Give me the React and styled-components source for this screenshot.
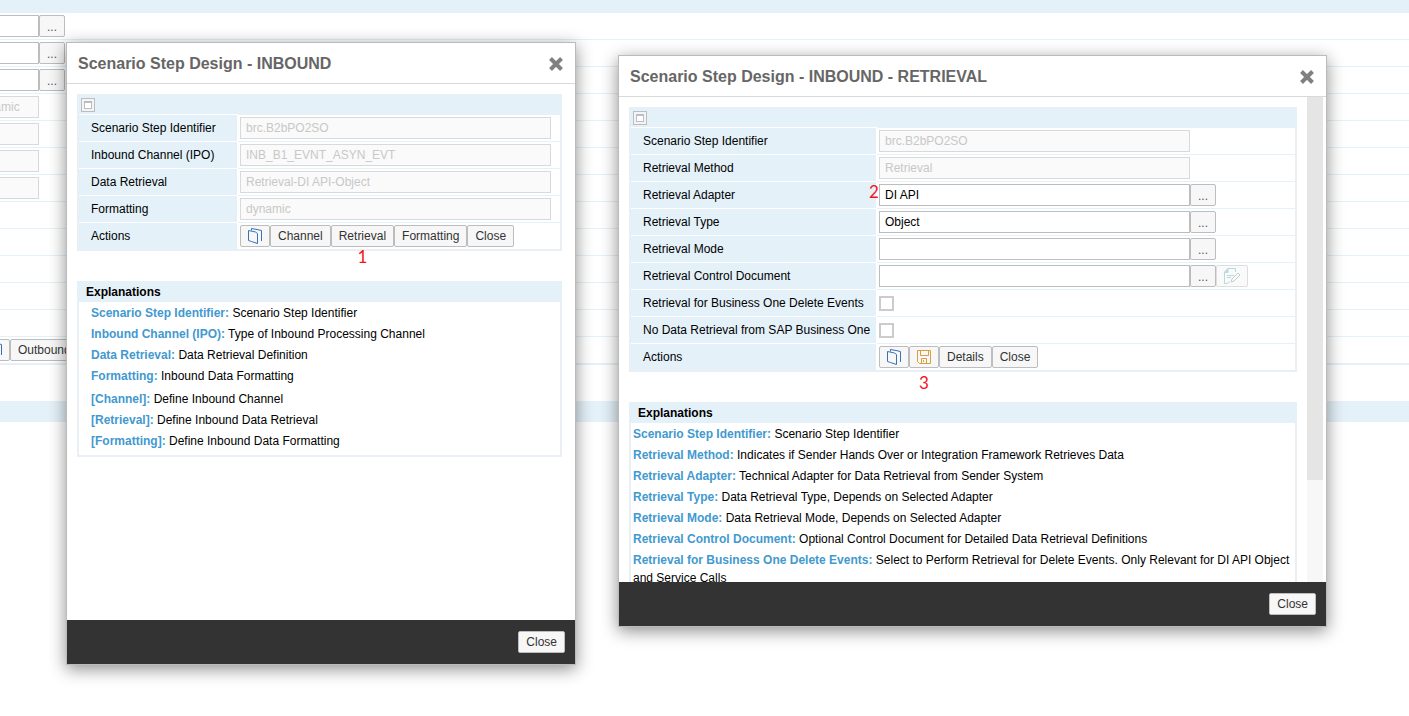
import { useId, useState } from "react";
import styled, { createGlobalStyle } from "styled-components";

const COLORS = {
  band: "#e4f1f9",
  border: "#e9eff5",
  link: "#4299d0",
  dark: "#333333",
};

const stepFields = [
  { label: "Scenario Step Identifier", value: "brc.B2bPO2SO", disabled: true },
  { label: "Inbound Channel (IPO)", value: "INB_B1_EVNT_ASYN_EVT", disabled: true },
  { label: "Data Retrieval", value: "Retrieval-DI API-Object", disabled: true },
  { label: "Formatting", value: "dynamic", disabled: true },
];

const retrievalFields = [
  { label: "Scenario Step Identifier", value: "brc.B2bPO2SO", disabled: true },
  { label: "Retrieval Method", value: "Retrieval", disabled: true },
  { label: "Retrieval Adapter", value: "DI API", lookup: true },
  { label: "Retrieval Type", value: "Object", lookup: true },
  { label: "Retrieval Mode", value: "", lookup: true },
  { label: "Retrieval Control Document", value: "", lookup: true, editor: true },
  { label: "Retrieval for Business One Delete Events", type: "checkbox" },
  { label: "No Data Retrieval from SAP Business One", type: "checkbox" },
];

const stepHelp = [
  ["Scenario Step Identifier", "Scenario Step Identifier"],
  ["Inbound Channel (IPO)", "Type of Inbound Processing Channel"],
  ["Data Retrieval", "Data Retrieval Definition"],
  ["Formatting", "Inbound Data Formatting"],
];

const stepButtonHelp = [
  ["[Channel]", "Define Inbound Channel"],
  ["[Retrieval]", "Define Inbound Data Retrieval"],
  ["[Formatting]", "Define Inbound Data Formatting"],
];

const retrievalHelp = [
  ["Scenario Step Identifier", "Scenario Step Identifier"],
  [
    "Retrieval Method",
    "Indicates if Sender Hands Over or Integration Framework Retrieves Data",
  ],
  ["Retrieval Adapter", "Technical Adapter for Data Retrieval from Sender System"],
  ["Retrieval Type", "Data Retrieval Type, Depends on Selected Adapter"],
  ["Retrieval Mode", "Data Retrieval Mode, Depends on Selected Adapter"],
  [
    "Retrieval Control Document",
    "Optional Control Document for Detailed Data Retrieval Definitions",
  ],
  [
    "Retrieval for Business One Delete Events",
    "Select to Perform Retrieval for Delete Events. Only Relevant for DI API Object and Service Calls",
  ],
];

//icons
const CopyIcon = () => (
  <svg width="14" height="16" viewBox="0 0 14 16" fill="none" stroke="#3a70b5">
    <path d="M0.5 2.5V12.5L3.5 13.5L9.5 15.5V5.5L7.5 4L0.5 2.5Z" />
    <path d="M3.5 2.5V0.5L9 1.5L13.5 2.5V13" />
  </svg>
);

const SaveIcon = () => (
  <svg width="16" height="16" viewBox="0 0 16 16" fill="none" stroke="#d99f3c">
    <path d="M1.5 1.5H14.5V14.5H3.5L1.5 12.5Z" />
    <path d="M4.5 1.5V6.5H12.5V1.5" />
    <path d="M5.5 14.5V9.5H10.5V14.5M7.5 11V13" />
  </svg>
);

const EditIcon = () => (
  <svg width="18" height="16" viewBox="0 0 18 16" fill="none" stroke="#b9d9de">
    <path d="M4.5 0.5H12.5V4M1.5 4V15.5H4L6.5 14" />
    <path d="M1 4.5L5 0.5V4.5Z" fill="#b9d9de" />
    <path d="M4 7.5H11M4 9.5H8" />
    <path d="M8 14L9 11L15 5L17 7L11 13Z" stroke="#c3cfd2" />
  </svg>
);

const CloseIcon = () => (
  <svg width="14" height="14" viewBox="0 0 14 14" stroke="#808080" strokeWidth="4">
    <path d="M1.5 1.5L12.5 12.5M12.5 1.5L1.5 12.5" />
  </svg>
);

const FormField = ({ label, value, type, disabled, lookup, editor, labelWidth }) => {
  const id = useId();
  const [text, setText] = useState(value);

  return (
    <Row $labelWidth={labelWidth}>
      <LabelCell as="label" htmlFor={id}>
        {label}
      </LabelCell>
      <ValueCell>
        {type === "checkbox" ? (
          <CheckBox id={id} type="checkbox" />
        ) : (
          <TextInput
            id={id}
            type="text"
            value={text}
            disabled={disabled}
            onChange={(e) => setText(e.target.value)}
          />
        )}
        {lookup && <LookupButton aria-label={`Select ${label}`}>...</LookupButton>}
        {editor && (
          <IconButton disabled aria-label="Edit document">
            <EditIcon />
          </IconButton>
        )}
      </ValueCell>
    </Row>
  );
};

const FormPanel = ({ fields, labelWidth, children }) => (
  <Panel>
    <PanelBar>
      <Collapse aria-label="Collapse" />
    </PanelBar>
    {fields.map((field) => (
      <FormField key={field.label} labelWidth={labelWidth} {...field} />
    ))}
    <Row $labelWidth={labelWidth}>
      <LabelCell>Actions</LabelCell>
      <ValueCell>{children}</ValueCell>
    </Row>
  </Panel>
);

const HelpList = ({ items }) =>
  items.map(([term, text]) => (
    <HelpItem key={term}>
      <strong>{term}:</strong> {text}
    </HelpItem>
  ));

const App = () => {
  return (
    <>
      <GlobalStyle />
      <Page>
        <PageBar />
        <PageRow>
          <PageInput aria-label="Sender" />
          <LookupButton>...</LookupButton>
        </PageRow>
        <PageRow>
          <PageInput aria-label="Inbound" />
          <LookupButton>...</LookupButton>
        </PageRow>
        <PageRow>
          <PageInput aria-label="Outbound" />
          <LookupButton>...</LookupButton>
        </PageRow>
        <PageRow>
          <PageInput aria-label="Formatting" defaultValue="dynamic" disabled />
        </PageRow>
        <PageRow>
          <PageInput aria-label="Processing" disabled />
        </PageRow>
        <PageRow>
          <PageInput aria-label="Flow" disabled />
        </PageRow>
        <PageRow>
          <PageInput aria-label="Error handling" disabled />
        </PageRow>
        <PageRow />
        <PageRow />
        <PageRow />
        <PageRow />
        <PageRow />
        <PageRow>
          <PageActions>
            <IconButton aria-label="Copy">
              <CopyIcon />
            </IconButton>
            <Button>Outbound</Button>
          </PageActions>
        </PageRow>
        <PageEnd />
        <SectionBar />
      </Page>

      <StepDialog role="dialog" aria-label="Scenario Step Design - INBOUND">
        <DialogHeader>
          <DialogTitle>Scenario Step Design - INBOUND</DialogTitle>
          <CloseButton aria-label="Close dialog">
            <CloseIcon />
          </CloseButton>
        </DialogHeader>
        <DialogBody>
          <Content $right={13}>
            <FormPanel fields={stepFields} labelWidth={158}>
              <IconButton aria-label="Copy">
                <CopyIcon />
              </IconButton>
              <Button>Channel</Button>
              <Button>
                Retrieval
                <StepMark $top={21}>1</StepMark>
              </Button>
              <Button>Formatting</Button>
              <Button>Close</Button>
            </FormPanel>
            <HelpPanel>
              <HelpTitle>Explanations</HelpTitle>
              <HelpGroup $indent={12}>
                <HelpList items={stepHelp} />
              </HelpGroup>
              <HelpGroup $indent={12}>
                <HelpList items={stepButtonHelp} />
              </HelpGroup>
            </HelpPanel>
          </Content>
        </DialogBody>
        <DialogFooter>
          <Button>Close</Button>
        </DialogFooter>
      </StepDialog>

      <RetrievalDialog
        role="dialog"
        aria-label="Scenario Step Design - INBOUND - RETRIEVAL"
      >
        <DialogHeader>
          <DialogTitle>Scenario Step Design - INBOUND - RETRIEVAL</DialogTitle>
          <CloseButton aria-label="Close dialog">
            <CloseIcon />
          </CloseButton>
        </DialogHeader>
        <DialogBody $scroll>
          <Content $right={10}>
            <AdapterMark>2</AdapterMark>
            <FormPanel fields={retrievalFields} labelWidth={245}>
              <IconButton aria-label="Copy">
                <CopyIcon />
              </IconButton>
              <IconButton aria-label="Save">
                <SaveIcon />
                <StepMark $top={26}>3</StepMark>
              </IconButton>
              <Button>Details</Button>
              <Button>Close</Button>
            </FormPanel>
            <HelpPanel>
              <HelpTitle>Explanations</HelpTitle>
              <HelpGroup $indent={2}>
                <HelpList items={retrievalHelp} />
              </HelpGroup>
            </HelpPanel>
          </Content>
          <ScrollTrack>
            <ScrollThumb />
          </ScrollTrack>
        </DialogBody>
        <DialogFooter>
          <Button>Close</Button>
        </DialogFooter>
      </RetrievalDialog>
    </>
  );
};

const GlobalStyle = createGlobalStyle`
  * {
    box-sizing: border-box;
  }
  body {
    margin: 0;
    overflow: hidden;
    background-color: white;
    color: black;
    font-family: "Liberation Sans", Arial, sans-serif;
    font-size: 12px;
  }
  button, input {
    font: inherit;
  }
`;

//page behind the dialogs
const Page = styled.main`
  display: flex;
  flex-direction: column;
  min-height: 100vh;
  overflow: hidden;
`;

const PageBar = styled.div`
  height: 13px;
  background-color: ${COLORS.band};
`;

const PageRow = styled.div`
  display: flex;
  align-items: center;
  height: 27px;
  padding-bottom: 1px;
  margin-left: -31px;
  border-bottom: 1px solid ${COLORS.band};
`;

const PageActions = styled.div`
  display: flex;
  padding-left: 11px;
`;

const PageEnd = styled.div`
  height: 37px;
  border-top: 1px solid ${COLORS.border};
`;

const SectionBar = styled.div`
  height: 21px;
  background-color: ${COLORS.band};
`;

//controls
const Button = styled.button`
  position: relative;
  flex: none;
  height: 22px;
  padding: 0 7px;
  border: 1px solid #bdbdbd;
  border-radius: 2px;
  background-color: #f7f7f7;
  color: ${COLORS.dark};
  line-height: 20px;
  cursor: pointer;
`;

const IconButton = styled(Button)`
  display: flex;
  align-items: center;
  justify-content: center;
  min-width: 30px;
  padding: 0 6px;
  &:disabled {
    border-color: #dedede;
    background-color: #fafafa;
    cursor: default;
  }
`;

const LookupButton = styled(Button)`
  width: 26px;
  padding: 1px 0 0;
  color: #555555;
`;

const TextInput = styled.input`
  width: 311px;
  height: 22px;
  padding: 0 5px;
  border: 1px solid #bdbdbd;
  background-color: white;
  color: black;
  &:disabled {
    border-color: #d9d9d9;
    background-color: #fafafa;
    color: #c8c8c8;
  }
`;

const PageInput = styled(TextInput)`
  width: 70px;
`;

const CheckBox = styled.input`
  appearance: none;
  width: 15px;
  height: 15px;
  margin: 0;
  border: 2px solid #cccccc;
  background-color: white;
  &:checked {
    background-color: ${COLORS.link};
  }
`;

//dialogs
const Dialog = styled.section`
  position: absolute;
  display: flex;
  flex-direction: column;
  border: 1px solid #bbbbbb;
  background-color: white;
  box-shadow: 0 4px 16px rgba(0, 0, 0, 0.45);
`;

const StepDialog = styled(Dialog)`
  top: 42px;
  left: 66px;
  width: 510px;
  height: 623px;
`;

const RetrievalDialog = styled(Dialog)`
  top: 55px;
  left: 618px;
  width: 709px;
  height: 572px;
`;

const DialogHeader = styled.header`
  display: flex;
  align-items: center;
  justify-content: space-between;
  flex: none;
  height: 41px;
  padding: 2px 12px 0 11px;
  border-bottom: 1px solid #d9d9d9;
`;

const DialogTitle = styled.h1`
  margin: 0;
  color: #666666;
  font-size: 16px;
  font-weight: bold;
`;

const CloseButton = styled.button`
  display: flex;
  padding: 0;
  border: none;
  background: none;
  cursor: pointer;
`;

const DialogBody = styled.div`
  display: flex;
  flex: 1;
  min-height: 0;
  padding-right: ${({ $scroll }) => ($scroll ? 3 : 0)}px;
  overflow: hidden;
`;

const Content = styled.div`
  position: relative;
  flex: 1;
  padding: 10px ${({ $right }) => $right}px 0 10px;
`;

const DialogFooter = styled.footer`
  display: flex;
  align-items: center;
  justify-content: flex-end;
  flex: none;
  height: 44px;
  padding: 0 10px;
  background-color: ${COLORS.dark};
`;

const ScrollTrack = styled.div`
  width: 16px;
  background-color: #f7f7f7;
`;

const ScrollThumb = styled.div`
  height: 79%;
  background-color: #e5e5e5;
`;

//panels
const Panel = styled.section`
  border: 2px solid ${COLORS.border};
  border-top: none;
`;

const PanelBar = styled.div`
  display: flex;
  align-items: center;
  height: 20px;
  margin: 0 -2px;
  padding: 2px 4px 0;
  background-color: ${COLORS.band};
`;

const Collapse = styled.button`
  position: relative;
  width: 14px;
  height: 14px;
  padding: 0;
  border: 1px solid #bdbdbd;
  background-color: #f0f5fa;
  &::after {
    content: "";
    position: absolute;
    inset: 2px;
    border: 1px solid #bdbdbd;
    border-top-width: 2px;
    background-color: white;
  }
`;

const Row = styled.div`
  display: grid;
  grid-template-columns: ${({ $labelWidth }) => $labelWidth}px 1fr;
  column-gap: 1px;
  height: 27px;
`;

const LabelCell = styled.div`
  padding: 0 0 0 12px;
  border-top: 1px solid white;
  background-color: ${COLORS.band};
  line-height: 26px;
  white-space: nowrap;
`;

const ValueCell = styled.div`
  display: flex;
  align-items: center;
  padding: 0 0 0 2px;
  border-top: 1px solid ${COLORS.band};
`;

const HelpPanel = styled.section`
  margin-top: 30px;
  padding-bottom: 2px;
  border: 2px solid ${COLORS.border};
  border-top: none;
`;

const HelpTitle = styled.h2`
  margin: 0 -2px;
  padding: 1px 0 0 9px;
  background-color: ${COLORS.band};
  font-size: 12px;
  font-weight: bold;
  line-height: 20px;
`;

const HelpGroup = styled.ul`
  margin: 0;
  padding: 2px 4px 0 ${({ $indent }) => $indent}px;
  list-style: none;
`;

const HelpItem = styled.li`
  margin-bottom: 3px;
  line-height: 18px;
  strong {
    color: ${COLORS.link};
  }
`;

//red numbers showing the order of the steps
const Mark = styled.span`
  position: absolute;
  color: #f5141c;
  font-family: Lato, sans-serif;
  font-size: 17px;
  line-height: 20px;
`;

const StepMark = styled(Mark)`
  top: ${({ $top }) => $top}px;
  left: 0;
  right: 0;
  text-align: center;
`;

const AdapterMark = styled(Mark)`
  top: 85px;
  left: 250px;
`;

export default App;
